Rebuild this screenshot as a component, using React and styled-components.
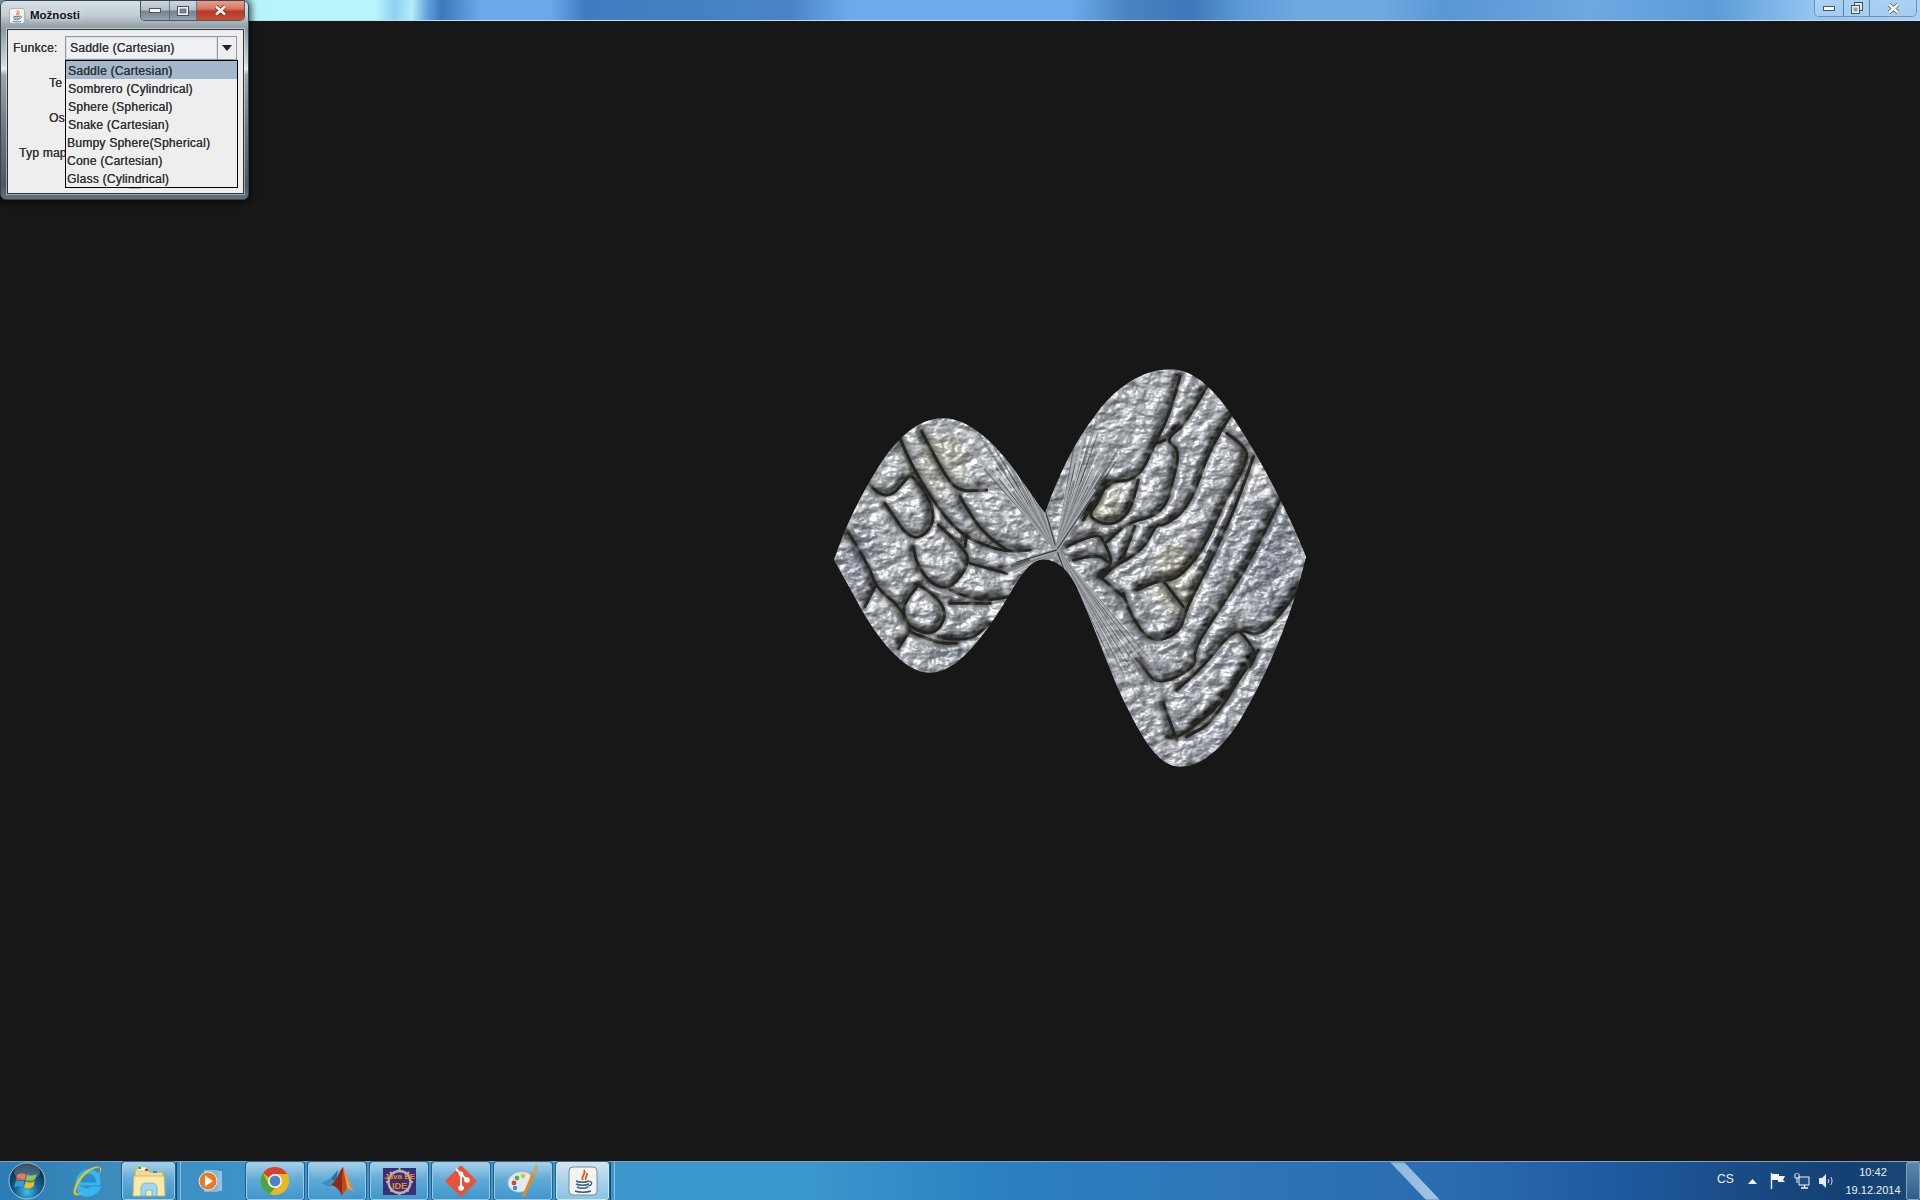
import React from 'react';
import styled, { createGlobalStyle } from 'styled-components';

const GlobalStyle = createGlobalStyle`
  html, body { margin: 0; padding: 0; background: #171717; }
  body { font-family: "Liberation Sans", Arial, sans-serif; overflow: hidden; }
`;

const Desktop = styled.div`
  position: relative;
  width: 1920px;
  height: 1200px;
  display: flex;
  flex-direction: column;
  overflow: hidden;
`;

const TitleBar = styled.div`
  height: 20px;
  flex: none;
  display: flex;
  justify-content: flex-end;
  padding-right: 3px;
  border-bottom: 1px solid #c9dcec;
  background: linear-gradient(92deg, #a8e6f4 0, #b9f6fb 300px, #b9f6fb 375px, #8fd0f2 395px, #b4ecf8 412px, #5f9fdc 428px, #3d77b8 442px,
    #6aa8ea 480px, #6aa8ea 550px, #3f7dc0 585px, #4a84c4 790px, #6eaaea 850px, #6eaaea 1070px, #4a84c2 1125px, #3f78b8 1190px,
    #5c98d6 1240px, #6fa9e2 1300px, #6fa9e2 1380px, #5a96d4 1444px, #6ea8e2 1590px, #5b9bd8 1713px, #93c5f0 1811px, #a9d2f5 1920px);
`;

const Canvas = styled.main`
  flex: 1;
  min-height: 0;
  background: #171717;
  padding: 329px 0 0 810px;
`;

const Taskbar = styled.footer`
  position: relative;
  height: 38px;
  flex: none;
  display: flex;
  align-items: stretch;
  border-top: 1px solid #7ba5c6;
  background: linear-gradient(90deg, #2b7cb4 0, #3d8cbc 110px, #3b96cb 300px, #3b98cd 800px, #2a80c2 1000px, #2e74b8 1250px,
    #2a6cb0 1450px, #1f5ca2 1600px, #1a4d88 1730px, #143f72 1850px, #1c4876 1920px);
  &::before {
    content: '';
    position: absolute;
    top: 0;
    bottom: 0;
    left: 1390px;
    width: 50px;
    background: linear-gradient(90deg, #b6d8ec, #dcecf6);
    clip-path: polygon(0 0, 14px 0, 100% 100%, 36px 100%);
    filter: blur(1px);
    opacity: 0.7;
  }
`;

const IconSlot = styled.div`
  position: relative;
  width: ${(p) => p.$w}px;
  flex: none;
  display: flex;
  align-items: center;
  justify-content: ${(p) => p.$justify || 'center'};
  padding: 0 ${(p) => p.$padR || 0}px 0 ${(p) => p.$pad || 0}px;
  box-sizing: border-box;
`;

const TaskButton = styled.div`
  position: relative;
  width: ${(p) => p.$w || 58}px;
  margin-right: ${(p) => p.$mr ?? 4}px;
  flex: none;
  display: flex;
  align-items: center;
  justify-content: center;
  box-sizing: border-box;
  border: 1px solid ${(p) => (p.$active ? '#cfe6f2' : '#9ccae4')};
  border-radius: 3px;
  box-shadow: 0 0 0 1px rgba(12, 50, 90, 0.55);
  background: ${(p) =>
    p.$active
      ? 'linear-gradient(180deg, #cfe5f2 0, #a8d2ea 50%, #8cc3e4 100%)'
      : 'linear-gradient(180deg, #a4d0e8 0, #62abd6 45%, #3f97cc 100%)'};
`;

const GroupGap = styled.div`
  width: 5px;
  flex: none;
  border-left: 1px solid #0f4a78;
  border-right: 1px solid #8cc0de;
  box-sizing: border-box;
`;

const Tray = styled.div`
  position: relative;
  margin-left: auto;
  display: flex;
  align-items: center;
  color: #eaf2f8;
  font-size: 11px;
`;

const Lang = styled.span`
  width: 30px;
  margin-top: -4px;
  font-size: 12px;
`;

const TrayIcon = styled.div`
  width: ${(p) => p.$w}px;
  margin-right: ${(p) => p.$mr}px;
  display: flex;
  justify-content: center;
`;

const Clock = styled.div`
  width: 56px;
  margin-right: 5px;
  display: flex;
  flex-direction: column;
  align-items: center;
  gap: 5px;
  line-height: 13px;
`;

const ShowDesktop = styled.div`
  width: 14px;
  align-self: stretch;
  box-sizing: border-box;
  border: 1px solid #7ea2c0;
  border-radius: 2px;
  background: linear-gradient(180deg, #5d88ac, #2e5c8a);
`;

const Caption = styled.div`
  height: ${(p) => p.$h}px;
  display: flex;
  box-sizing: border-box;
  border: 1px solid ${(p) => (p.$desk ? '#6f93b6' : '#4a5660')};
  border-top: 0;
  border-radius: 0 0 5px 5px;
  overflow: hidden;
`;

const CaptionBtn = styled.div`
  width: ${(p) => p.$w}px;
  display: flex;
  align-items: center;
  justify-content: center;
  box-sizing: border-box;
  border-right: ${(p) => (p.$last ? '0' : '1px solid rgba(70, 90, 110, 0.7)')};
  background: ${(p) =>
    p.$close
      ? 'linear-gradient(180deg, #e6a08e 0, #d77766 40%, #b83a28 55%, #c4503a 100%)'
      : p.$desk
        ? 'linear-gradient(180deg, #a9d2f5, #a4cdf2)'
        : 'linear-gradient(180deg, #cfd7de 0, #b4c0ca 45%, #76848f 55%, #97a3ad 100%)'};
`;

const Dialog = styled.section`
  position: absolute;
  left: 0;
  top: 0;
  width: 249px;
  height: 200px;
  box-sizing: border-box;
  display: flex;
  flex-direction: column;
  padding: 0 4px 5px 6px;
  border: 1px solid #39444d;
  border-radius: 6px;
  box-shadow: 0 0 7px 2px rgba(0, 0, 0, 0.7);
  background: linear-gradient(180deg, #d5dfe6 0, #c4ced5 14px, #a3aeb6 22px, #8e9aa3 28px, #cdd5da 62px, #e8edf0 68px,
    #9aa5ad 74px, #6b7780 130px, #4d5962 185px, #6a757d 200px);
`;

const DialogTitle = styled.header`
  height: 28px;
  flex: none;
  display: flex;
  align-items: flex-start;
`;

const TitleText = styled.span`
  margin: 8px 0 0 5px;
  font-size: 11.5px;
  font-weight: 700;
  color: #0c1218;
  text-shadow: 0 0 5px rgba(255, 255, 255, 0.75);
`;

const TitleIcon = styled.div`
  width: 16px;
  height: 16px;
  margin: 7px 0 0 2px;
`;

const TitleCaption = styled.div`
  margin-left: auto;
  margin-right: -1px;
`;

const Panel = styled.div`
  position: relative;
  flex: 1;
  border: 1px solid #2c343a;
  box-shadow: 0 0 0 1px rgba(255, 255, 255, 0.45);
  background: #eeeeee;
  color: #333333;
  font-size: 12px;
  letter-spacing: 0.25px;
  text-shadow: 0.25px 0 0 #333333;
`;

const Row = styled.div`
  height: ${(p) => p.$h || 35}px;
  display: flex;
  align-items: center;
`;

const Label = styled.label`
  width: 57px;
  height: 16px;
  line-height: 16px;
  flex: none;
  box-sizing: border-box;
  padding-left: ${(p) => p.$indent}px;
  white-space: nowrap;
`;

const Combo = styled.div`
  width: 172px;
  height: 24px;
  margin-top: 1px;
  display: flex;
  box-sizing: border-box;
  border: 1px solid #8a9aa9;
  background: #eeeeee;
`;

const ComboValue = styled.div`
  flex: 1;
  display: flex;
  align-items: center;
  padding: 0 0 1px 3px;
  box-sizing: border-box;
  border: 1px solid #d8e0e8;
  background: #eef0f3;
`;

const ComboArrow = styled.div`
  width: 18px;
  flex: none;
  display: flex;
  align-items: center;
  justify-content: center;
  border-left: 1px solid #8a9aa9;
  &::after {
    content: '';
    border-top: 6px solid #222;
    border-left: 5px solid transparent;
    border-right: 5px solid transparent;
  }
`;

const Popup = styled.ul`
  position: absolute;
  left: 57px;
  top: 30px;
  width: 173px;
  height: 128px;
  margin: 0;
  padding: 0;
  box-sizing: border-box;
  list-style: none;
  border: 1px solid #000;
  background: #eeeeee;
  z-index: 2;
`;

const PopupItem = styled.li`
  height: 18px;
  line-height: 20px;
  padding-left: ${(p) => p.$pad}px;
  white-space: nowrap;
  background: ${(p) => (p.$selected ? '#a3b8cc' : 'transparent')};
`;

const Sliver = styled.div`
  width: 12px;
  height: 4px;
  margin: 12px 0 0 121px;
  background: #a3b8cc;
`;

const options = [
  ['Saddle (Cartesian)', 2],
  ['Sombrero (Cylindrical)', 2],
  ['Sphere (Spherical)', 2],
  ['Snake (Cartesian)', 2],
  ['Bumpy Sphere(Spherical)', 1],
  ['Cone (Cartesian)', 1],
  ['Glass (Cylindrical)', 1],
];

// mortar lines of the brick texture, in the surface's own coordinates (crop x3)
const mortar = [
  [[270, 265], [300, 340], [380, 470], [450, 550], [520, 585], [590, 605], [660, 600]],
  [[335, 245], [400, 370], [445, 425], [530, 420]],
  [[450, 440], [490, 510], [540, 565], [590, 600]],
  [[175, 400], [225, 460], [300, 375]],
  [[300, 375], [330, 395], [385, 510], [310, 585], [225, 460]],
  [[110, 540], [180, 650], [195, 710], [270, 770], [300, 830]],
  [[385, 525], [460, 590], [480, 640], [420, 720], [360, 700], [320, 640], [310, 590]],
  [[480, 640], [590, 670]],
  [[470, 555], [465, 590]],
  [[420, 720], [500, 755], [600, 740]],
  [[325, 705], [420, 760], [380, 860], [290, 830], [275, 770], [325, 705]],
  [[420, 760], [540, 760]],
  [[385, 860], [470, 880], [540, 820]],
  [[195, 710], [165, 770]],
  [[300, 840], [265, 895]],
  [[300, 845], [380, 880], [440, 880]],
  [[1110, 80], [1080, 190], [1040, 270], [985, 390], [890, 395], [820, 510]],
  [[890, 395], [870, 450], [830, 500], [900, 530], [960, 490], [985, 390]],
  [[1190, 110], [1130, 220], [1065, 270], [1110, 300], [1090, 390], [1060, 490], [950, 520], [925, 545], [885, 580]],
  [[1065, 270], [1040, 280]],
  [[1265, 190], [1200, 290], [1140, 470], [1060, 530], [1040, 520], [1000, 600], [910, 650], [880, 680]],
  [[1250, 250], [1310, 290], [1310, 340], [1240, 460], [1180, 600], [1100, 690], [1050, 690], [980, 720]],
  [[1330, 320], [1290, 440], [1200, 640], [1130, 770], [1110, 850], [1020, 880], [960, 790], [940, 730]],
  [[1410, 450], [1330, 620], [1220, 790], [1150, 900], [1160, 950], [1040, 1010], [990, 930]],
  [[1050, 680], [1120, 770]],
  [[1480, 700], [1400, 810], [1340, 860], [1275, 830], [1180, 950], [1100, 1020]],
  [[1275, 830], [1345, 900], [1320, 950]],
  [[1345, 900], [1260, 1040], [1100, 1170], [1070, 1160]],
  [[1320, 930], [1220, 1110], [1130, 1160]],
  [[1060, 1060], [1100, 1170]],
  [[770, 590], [860, 545], [885, 580], [910, 640], [870, 680]],
  [[790, 630], [860, 610], [900, 640]],
  [[870, 680], [940, 740]],
  [[975, 530], [940, 620]],
];

const patches = [
  [400, 340, 70, 90, '#9a9a8e'],
  [880, 470, 70, 60, '#9a9888'],
  [1100, 680, 70, 110, '#949284'],
  [1380, 620, 80, 170, '#70747f'],
  [1320, 380, 30, 60, '#a2989a'],
  [1200, 600, 60, 90, '#7a7e8a'],
  [420, 900, 60, 40, '#6e727c'],
  [150, 620, 60, 110, '#747884'],
];

const curve = (pts) => {
  let d = `M${pts[0][0]} ${pts[0][1]}`;
  for (let i = 1; i < pts.length - 1; i++) {
    const mx = (pts[i][0] + pts[i + 1][0]) / 2;
    const my = (pts[i][1] + pts[i + 1][1]) / 2;
    d += `Q${pts[i][0]} ${pts[i][1]} ${mx} ${my}`;
  }
  const last = pts[pts.length - 1];
  return d + `L${last[0]} ${last[1]}`;
};

const outline =
  'M72 630C105 530 150 440 200 360C255 270 320 205 400 205C480 205 560 285 620 370C655 420 685 465 705 490C740 390 790 280 860 190C920 110 1000 58 1080 58C1160 58 1225 130 1290 235C1370 360 1440 500 1488 620C1450 780 1380 960 1290 1110C1235 1200 1170 1250 1110 1250C1040 1250 990 1150 940 1050C890 940 850 820 800 710C780 670 750 630 700 628C650 630 620 700 570 780C510 870 440 968 360 968C280 968 200 860 150 770C120 715 95 670 72 630Z';

// wedges of stretched texture that fan out of the saddle point: [from angle, to angle, length]
const wedges = [
  [-2.32, -1.85, 440],
  [-1.42, -0.98, 430],
  [0.85, 1.22, 700],
  [2.3, 2.85, 170],
];

const Surface = () => {
  const streaks = [];
  wedges.forEach(([from, to, len], w) => {
    for (let i = 0; i < 22; i++) {
      const a = from + ((to - from) * i) / 21;
      const far = len * (0.5 + ((i * 7) % 5) * 0.12);
      streaks.push(
        <line
          key={`${w}-${i}`}
          x1={740}
          y1={600}
          x2={740 + Math.cos(a) * far}
          y2={600 + Math.sin(a) * far}
          stroke={['#dcdfe2', '#54585c', '#a4a9ae', '#3a3e41', '#c6cacd', '#7c8086'][i % 6]}
          strokeWidth={4 + (i % 3) * 4}
        />,
      );
    }
  });
  return (
    <svg width="520" height="430" viewBox="0 0 1560 1290" style={{ display: 'block' }}>
      <defs>
        <clipPath id="lobes">
          <path d={outline} />
        </clipPath>
        <linearGradient id="sheen" x1="0" y1="0" x2="1" y2="1">
          <stop offset="0" stopColor="#a2a6a8" />
          <stop offset="0.5" stopColor="#8e9297" />
          <stop offset="1" stopColor="#84888f" />
        </linearGradient>
        <mask id="joints" maskUnits="userSpaceOnUse" x="0" y="0" width="1560" height="1290">
          <rect width="1560" height="1290" fill="#fff" />
          {mortar.map((m, i) => (
            <path key={i} d={curve(m)} fill="none" stroke="#000" strokeWidth="9" strokeLinecap="round" strokeLinejoin="round" />
          ))}
        </mask>
        <filter id="bevel" filterUnits="userSpaceOnUse" x="0" y="0" width="1560" height="1290" colorInterpolationFilters="sRGB">
          <feGaussianBlur in="SourceAlpha" stdDeviation="10" result="soft" />
          <feTurbulence type="fractalNoise" baseFrequency="0.02 0.03" numOctaves="4" seed="11" result="noise" />
          <feComposite in="soft" in2="noise" operator="arithmetic" k1="0" k2="0.7" k3="0.3" k4="0" result="height" />
          <feDiffuseLighting in="height" surfaceScale="22" diffuseConstant="1.3" lightingColor="#ffffff" result="diff">
            <feDistantLight azimuth="225" elevation="52" />
          </feDiffuseLighting>
          <feSpecularLighting in="height" surfaceScale="22" specularConstant="0.5" specularExponent="30" lightingColor="#ffffff" result="spec">
            <feDistantLight azimuth="225" elevation="52" />
          </feSpecularLighting>
          <feComposite in="SourceGraphic" in2="diff" operator="arithmetic" k1="1" k2="0" k3="0" k4="0" result="lit" />
          <feComposite in="spec" in2="SourceAlpha" operator="in" result="gloss" />
          <feComposite in="lit" in2="gloss" operator="arithmetic" k1="0" k2="1" k3="1" k4="0" />
        </filter>
        <filter id="patch">
          <feGaussianBlur stdDeviation="22" />
        </filter>
        <filter id="halo">
          <feGaussianBlur stdDeviation="5" />
        </filter>
        <filter id="blotch" x="0" y="0" width="100%" height="100%">
          <feTurbulence type="fractalNoise" baseFrequency="0.03 0.05" numOctaves="3" seed="7" />
          <feColorMatrix values="0 0 0 0 1  0 0 0 0 1  0 0 0 0 1  7 0 0 0 -4.1" />
          <feGaussianBlur stdDeviation="2.5" />
        </filter>
        <radialGradient id="fade" gradientUnits="userSpaceOnUse" cx="740" cy="600" r="520">
          <stop offset="0" stopColor="#fff" />
          <stop offset="0.4" stopColor="#fff" stopOpacity="0.9" />
          <stop offset="1" stopColor="#fff" stopOpacity="0" />
        </radialGradient>
        <mask id="fanMask" maskUnits="userSpaceOnUse" x="0" y="0" width="1560" height="1290">
          <rect width="1560" height="1290" fill="url(#fade)" />
        </mask>
        <filter id="fanSoft">
          <feGaussianBlur stdDeviation="1.5" />
        </filter>
      </defs>
      <g clipPath="url(#lobes)">
        <rect width="1560" height="1290" fill="#2c2c28" />
        <g filter="url(#bevel)">
          <g mask="url(#joints)">
            <rect width="1560" height="1290" fill="url(#sheen)" />
            <g filter="url(#patch)" opacity="0.85">
              {patches.map(([cx, cy, rx, ry, fill], i) => (
                <ellipse key={i} cx={cx} cy={cy} rx={rx} ry={ry} fill={fill} />
              ))}
            </g>
          </g>
        </g>
        <rect width="1560" height="1290" filter="url(#blotch)" opacity="0.6" />
        <g filter="url(#halo)" opacity="0.55">
          {mortar.map((m, i) => (
            <path key={i} d={curve(m)} fill="none" stroke="#1c1c18" strokeWidth="15" strokeLinecap="round" strokeLinejoin="round" />
          ))}
        </g>
        <g mask="url(#fanMask)" filter="url(#fanSoft)">
          {streaks}
        </g>
      </g>
    </svg>
  );
};

const MinGlyph = ({ w = 12, fill = '#f4f6f8' }) => (
  <svg width={w} height="5" viewBox="0 0 12 5">
    <rect x="0.5" y="0.5" width="11" height="4" fill={fill} stroke="#4a5660" />
  </svg>
);

const MaxGlyph = () => (
  <svg width="12" height="10" viewBox="0 0 12 10">
    <rect x="0.5" y="0.5" width="11" height="9" fill="#eef2f5" stroke="#46525c" />
    <rect x="3" y="3" width="6" height="4" fill="#7d8a95" stroke="#46525c" strokeWidth="0.6" />
  </svg>
);

const RestoreGlyph = () => (
  <svg width="12" height="12" viewBox="0 0 12 12">
    <rect x="3.5" y="0.5" width="8" height="8" fill="#dfe6ee" stroke="#46525c" />
    <rect x="0.5" y="3.5" width="8" height="8" fill="#eef2f5" stroke="#46525c" />
    <rect x="2.5" y="5.5" width="4" height="4" fill="#8aa0b4" />
  </svg>
);

const CloseGlyph = ({ stroke = '#5a5a5a' }) => (
  <svg width="13" height="11" viewBox="0 0 13 11">
    <path d="M2 1.5L11 9.5M11 1.5L2 9.5" stroke={stroke} strokeWidth="4.2" />
    <path d="M2 1.5L11 9.5M11 1.5L2 9.5" stroke="#f6f6f6" strokeWidth="2.6" />
  </svg>
);

const JavaCup = ({ size = 30 }) => (
  <svg width={size} height={size} viewBox="0 0 30 30">
    <rect x="1" y="1" width="28" height="28" rx="4" fill="#f3f3f1" stroke="#7f8a92" />
    <path d="M16 4C19 8 12 10 15 14M19 7C20 10 16 11 18 14" fill="none" stroke="#d9571c" strokeWidth="1.8" />
    <path d="M8 15C11 16.5 18 16.5 21 15M8 18C11 19.5 18 19.5 21 18M9 21C12 22.5 17 22.5 20 21M7 25C11 26.5 19 26.5 23 25" fill="none" stroke="#35607f" strokeWidth="1.5" />
    <path d="M21 15.5C25 15 24.5 19.5 20 20" fill="none" stroke="#35607f" strokeWidth="1.2" />
  </svg>
);

const StartOrb = () => (
  <svg width="38" height="38" viewBox="0 0 38 38">
    <defs>
      <radialGradient id="orb" cx="0.5" cy="0.8" r="0.75">
        <stop offset="0" stopColor="#3fc0ee" />
        <stop offset="0.45" stopColor="#14608e" />
        <stop offset="1" stopColor="#10263e" />
      </radialGradient>
    </defs>
    <circle cx="19" cy="19" r="18" fill="url(#orb)" stroke="#a8c4d8" />
    <path d="M9 13C12 11 15 11 18 12.5L16.5 18.5C14 17.3 11 17.3 7.8 18.8Z" fill="#e8582a" />
    <path d="M19 12.7C22 14 25 14 28.5 12L27 18C24 20 21 20 17.8 18.8Z" fill="#7cb82f" />
    <path d="M7.6 19.6C11 18 14 18.2 16.3 19.3L14.8 25C12 24 9.5 24 6.2 25.5Z" fill="#2e9fe0" />
    <path d="M17.6 19.6C21 21 24 20.8 26.8 19L25.4 24.6C22.5 26.6 19.5 26.7 16.2 25.4Z" fill="#f6bb1e" />
    <ellipse cx="19" cy="10" rx="13" ry="8" fill="#fff" opacity="0.2" />
  </svg>
);

const IeIcon = () => (
  <svg width="32" height="34" viewBox="0 0 32 34">
    <path d="M7 19H26C27 9 18 5 12 9C6 13 4 22 8 27C12 32 21 31 25 25H19C16 28 10 27 9 23" fill="none" stroke="#35b6ee" strokeWidth="5" />
    <rect x="9" y="15.5" width="15" height="3" fill="#1f8fd6" />
    <path d="M27 3C22 1 12 7 6 16C2 23 0 29 3 31C5 32 8 31 11 29C7 30 4 30 4 28C3 25 8 16 14 10C20 5 27 2 28 5C28.500 7 27 10 26 12C29 8 31 4 27 3Z" fill="#f2c01e" />
  </svg>
);

const FolderIcon = () => (
  <svg width="34" height="32" viewBox="0 0 34 32">
    <path d="M3 4H15L17 7H31V28H3Z" fill="#f0dc96" stroke="#c9ae62" />
    <rect x="5" y="2" width="9" height="4" fill="#fff6d8" stroke="#c9ae62" strokeWidth="0.5" />
    <rect x="6" y="2" width="3" height="2" fill="#38a845" />
    <rect x="13" y="4" width="3" height="2" fill="#c83a2a" />
    <rect x="21" y="6" width="4" height="2" fill="#2a8fd0" />
    <path d="M2 11H32L33 31H1Z" fill="#fbe9a8" stroke="#d2b96c" />
    <path d="M9 24C9 19 11 18 17 18C23 18 25 19 25 24V31H20V25H14V31H9Z" fill="#9fd8ee" stroke="#5ca8c8" strokeWidth="0.7" />
  </svg>
);

const MediaIcon = () => (
  <svg width="28" height="26" viewBox="0 0 28 26">
    <rect x="10" y="3" width="15" height="20" fill="#b8d8ea" opacity="0.7" />
    <rect x="7" y="2" width="14" height="22" fill="#86b8d6" />
    <circle cx="11" cy="13" r="9" fill="#ea7a22" stroke="#fff" strokeWidth="0.8" />
    <path d="M8 7.500L16 13L8 18.500Z" fill="#fff" />
  </svg>
);

const ChromeIcon = () => (
  <svg width="30" height="30" viewBox="0 0 30 30">
    <circle cx="15" cy="15" r="14" fill="#e8b91e" />
    <path d="M15 1A14 14 0 0 1 27.100 8H15A7 7 0 0 0 8.900 11.500L3 7A14 14 0 0 1 15 1Z" fill="#d8412f" />
    <path d="M3 7L8.900 18.500A7 7 0 0 0 15 22L9.600 28A14 14 0 0 1 3 7Z" fill="#4aa547" />
    <circle cx="15" cy="15" r="7" fill="#f4f6f8" />
    <circle cx="15" cy="15" r="5.400" fill="#4c84c8" />
  </svg>
);

const MatlabIcon = () => (
  <svg width="34" height="30" viewBox="0 0 34 30">
    <path d="M1 17L11 12L16 17L9 21Z" fill="#3d8fc4" />
    <path d="M11 12L18 4L16 17Z" fill="#2a6fa0" />
    <path d="M23 1C26 6 30 20 34 26L27 22L22 30C20 25 18 21 11 19C17 15 19 6 23 1Z" fill="#c8481e" />
    <path d="M23 1C26 6 30 20 34 26L27 22C26 14 24 7 23 1Z" fill="#eda03a" />
    <path d="M11 19C17 15 19 6 23 1C22 10 22 22 22 30C20 25 18 21 11 19Z" fill="#8f2a18" />
  </svg>
);

const EclipseIcon = () => (
  <svg width="33" height="27" viewBox="0 0 33 27">
    <rect width="33" height="27" fill="#3a2f72" />
    <circle cx="16.500" cy="14" r="11" fill="none" stroke="#b4b4b8" strokeWidth="2.400" />
    <path d="M16.500 0V27M3 14H30M7 4L26 24M26 4L7 24" stroke="#b4b4b8" strokeWidth="2" strokeDasharray="3 21" />
    <text x="16.500" y="11" textAnchor="middle" fontSize="8" fontWeight="700" fontFamily="'Liberation Sans', sans-serif" fill="#f58a1f">Java EE</text>
    <text x="16.500" y="21" textAnchor="middle" fontSize="9" fontWeight="700" fontFamily="'Liberation Sans', sans-serif" fill="#f58a1f">IDE</text>
  </svg>
);

const GitIcon = () => (
  <svg width="32" height="32" viewBox="0 0 32 32">
    <path d="M14.500 1.500L1.500 14.500A2 2 0 0 0 1.500 17.500L14.500 30.500A2 2 0 0 0 17.500 30.500L30.500 17.500A2 2 0 0 0 30.500 14.500L17.500 1.500A2 2 0 0 0 14.500 1.500Z" fill="#e9513a" />
    <path d="M11 4L16 9V22M16 9L22 15" stroke="#fff" strokeWidth="2" fill="none" />
    <circle cx="16" cy="9" r="2.400" fill="#fff" />
    <circle cx="16" cy="23" r="2.800" fill="#fff" />
    <circle cx="22" cy="15" r="2.800" fill="#fff" />
  </svg>
);

const PaintIcon = () => (
  <svg width="32" height="34" viewBox="0 0 32 34">
    <path d="M1 19C1 12 9 7 17 8C24 9 25 13 23 17C20 21 22 25 18 27C11 30 1 27 1 19Z" fill="#dfeaf2" stroke="#a8bccb" strokeWidth="0.6" />
    <circle cx="7" cy="19" r="2.400" fill="#d8443a" />
    <circle cx="10" cy="14" r="2.400" fill="#58b04a" />
    <circle cx="16" cy="12" r="2.400" fill="#e6c22a" />
    <circle cx="8" cy="24" r="2.200" fill="#3d8ed0" />
    <path d="M25 9L15 32L17.500 33L28 11Z" fill="#e88a1e" />
    <path d="M25 9L28 11L31 3L29 0Z" fill="#c9a468" />
  </svg>
);

const FlagIcon = () => (
  <svg width="16" height="16" viewBox="0 0 16 16">
    <path d="M1.500 0V16" stroke="#f4f7fa" strokeWidth="1.400" />
    <path d="M2 1H9V3H15L13 7L15 9H8V7H2Z" fill="#f4f7fa" />
  </svg>
);

const NetIcon = () => (
  <svg width="16" height="17" viewBox="0 0 16 17">
    <rect x="5" y="4" width="10" height="8" fill="#20507e" stroke="#f0f4f8" />
    <path d="M7 15H14M10.500 12V15" stroke="#f0f4f8" strokeWidth="1.400" />
    <path d="M1 1V5H5V1M2 0V1M4 0V1M3 5V10" stroke="#f0f4f8" fill="none" />
  </svg>
);

const SpeakerIcon = () => (
  <svg width="16" height="14" viewBox="0 0 16 14">
    <path d="M1 4H4L8 0V14L4 10H1Z" fill="#e4ebf1" />
    <path d="M10 5C11 6 11 8 10 9M12.500 3C14.500 5 14.500 9 12.500 11" fill="none" stroke="#e4ebf1" />
  </svg>
);

const App = () => {
  return (
    <Desktop>
      <GlobalStyle />
      <TitleBar>
        <Caption $desk $h={17}>
          <CaptionBtn $desk $w={29}>
            <MinGlyph />
          </CaptionBtn>
          <CaptionBtn $desk $w={26}>
            <RestoreGlyph />
          </CaptionBtn>
          <CaptionBtn $desk $last $w={46}>
            <CloseGlyph />
          </CaptionBtn>
        </Caption>
      </TitleBar>

      <Canvas>
        <Surface />
      </Canvas>

      <Taskbar>
        <IconSlot $w={54} $pad={8} $justify="flex-start">
          <StartOrb />
        </IconSlot>
        <IconSlot $w={68}>
          <IeIcon />
        </IconSlot>
        <TaskButton $w={53} $mr={1}>
          <FolderIcon />
        </TaskButton>
        <GroupGap />
        <IconSlot $w={65} $padR={5}>
          <MediaIcon />
        </IconSlot>
        <TaskButton>
          <ChromeIcon />
        </TaskButton>
        <TaskButton>
          <MatlabIcon />
        </TaskButton>
        <TaskButton>
          <EclipseIcon />
        </TaskButton>
        <TaskButton>
          <GitIcon />
        </TaskButton>
        <TaskButton>
          <PaintIcon />
        </TaskButton>
        <TaskButton $w={53} $mr={1} $active>
          <JavaCup />
        </TaskButton>
        <GroupGap />
        <Tray>
          <Lang>CS</Lang>
          <TrayIcon $w={10} $mr={13}>
            <svg width="9" height="5" viewBox="0 0 9 5">
              <path d="M4.500 0L9 5H0Z" fill="#f4f7fa" />
            </svg>
          </TrayIcon>
          <TrayIcon $w={16} $mr={8}>
            <FlagIcon />
          </TrayIcon>
          <TrayIcon $w={16} $mr={8}>
            <NetIcon />
          </TrayIcon>
          <TrayIcon $w={16} $mr={11}>
            <SpeakerIcon />
          </TrayIcon>
          <Clock>
            <span>10:42</span>
            <span>19.12.2014</span>
          </Clock>
          <ShowDesktop />
        </Tray>
      </Taskbar>

      <Dialog>
        <DialogTitle>
          <TitleIcon>
            <JavaCup size={16} />
          </TitleIcon>
          <TitleText>Možnosti</TitleText>
          <TitleCaption>
            <Caption $h={20}>
              <CaptionBtn $w={29}>
                <MinGlyph />
              </CaptionBtn>
              <CaptionBtn $w={27}>
                <MaxGlyph />
              </CaptionBtn>
              <CaptionBtn $close $last $w={47}>
                <CloseGlyph stroke="#7a2a1e" />
              </CaptionBtn>
            </Caption>
          </TitleCaption>
        </DialogTitle>
        <Panel>
          <Row>
            <Label $indent={5}>Funkce:</Label>
            <Combo>
              <ComboValue>Saddle (Cartesian)</ComboValue>
              <ComboArrow />
            </Combo>
          </Row>
          <Row>
            <Label $indent={41}>Te</Label>
          </Row>
          <Row>
            <Label $indent={41}>Os</Label>
          </Row>
          <Row>
            <Label $indent={11}>Typ map</Label>
          </Row>
          <Row $h={22}>
            <Sliver />
          </Row>
          <Popup>
            {options.map(([name, pad], i) => (
              <PopupItem key={name} $pad={pad} $selected={i === 0}>
                {name}
              </PopupItem>
            ))}
          </Popup>
        </Panel>
      </Dialog>
    </Desktop>
  );
};

export default App;
